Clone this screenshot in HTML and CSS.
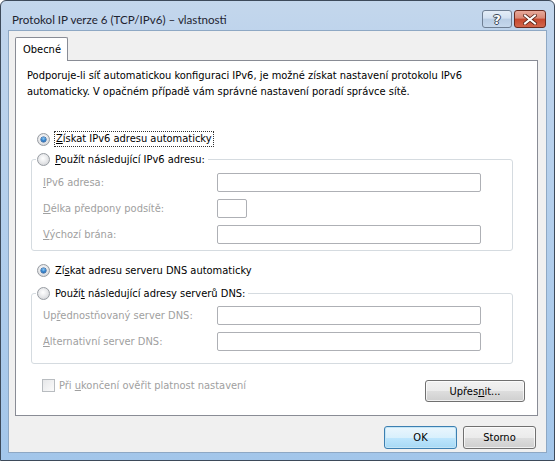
FILE: index.html
```html
<!DOCTYPE html>
<html lang="cs">
<head>
<meta charset="utf-8">
<title>Protokol IP verze 6 (TCP/IPv6) – vlastnosti</title>
<link rel="stylesheet" href="styles.css">
</head>
<body>
<div class="window">
  <div class="titlebar">
    <span class="title">Protokol IP verze 6 (TCP/IPv6) – vlastnosti</span>
    <div class="caption-btns">
      <span class="cap help">?</span>
      <span class="cap close">
        <svg width="14" height="11" viewBox="0 0 14 11"><path d="M2 1.5 L12 9.5 M12 1.5 L2 9.5" stroke="#5a2418" stroke-width="3.6" stroke-linecap="square" fill="none"/><path d="M2 1.5 L12 9.5 M12 1.5 L2 9.5" stroke="#fff" stroke-width="2" stroke-linecap="square" fill="none"/></svg>
      </span>
    </div>
  </div>
  <div class="client">
    <div class="tabs"><div class="tab">Obecné</div></div>
    <div class="panel">
      <p class="intro">Podporuje-li síť automatickou konfiguraci IPv6, je možné získat nastavení protokolu IPv6<br>automaticky. V opačném případě vám správné nastavení poradí správce sítě.</p>

      <div class="radio-row r-ip"><span class="radio checked"></span><span class="focus"><u>Z</u>ískat IPv6 adresu automaticky</span></div>
      <fieldset class="group g1">
        <legend><span class="radio"></span><span class="legend-text"><u>P</u>oužít následující IPv6 adresu:</span></legend>
        <div class="rows">
          <div class="field"><span class="lbl"><u>I</u>Pv6 adresa:</span><span class="input wide"></span></div>
          <div class="field"><span class="lbl"><u>D</u>élka předpony podsítě:</span><span class="input small"></span></div>
          <div class="field"><span class="lbl"><u>V</u>ýchozí brána:</span><span class="input wide"></span></div>
        </div>
      </fieldset>

      <div class="radio-row r-dns"><span class="radio checked"></span><span class="plain">Zí<u>s</u>kat adresu serveru DNS automaticky</span></div>
      <fieldset class="group g2">
        <legend><span class="radio"></span><span class="legend-text">Použí<u>t</u> následující adresy serverů DNS:</span></legend>
        <div class="rows">
          <div class="field"><span class="lbl">Up<u>ř</u>ednostňovaný server DNS:</span><span class="input wide"></span></div>
          <div class="field"><span class="lbl"><u>A</u>lternativní server DNS:</span><span class="input wide"></span></div>
        </div>
      </fieldset>

      <div class="bottom-row">
        <div class="check"><span class="checkbox"></span><span class="lbl">Při <u>u</u>končení ověřit platnost nastavení</span></div>
        <span class="btn adv">Upřes<u>n</u>it...</span>
      </div>
    </div>
    <div class="dialog-btns">
      <span class="btn default">OK</span>
      <span class="btn">Storno</span>
    </div>
  </div>
</div>
</body>
</html>
```

FILE: styles.css
```css
* { box-sizing: border-box; }
html, body { margin: 0; padding: 0; background: #fff; }
body { width: 555px; height: 461px; overflow: hidden; }

.window {
  width: 555px;
  height: 461px;
  border: 1px solid #3d4a5a;
  border-radius: 6px 6px 0 0;
  background: linear-gradient(#c4d7ec 0, #bfd4ec 30px, #b4cfec 200px, #a3c6ea 461px);
  display: flex;
  flex-direction: column;
  padding: 0 7px 7px 7px;
  font-family: "DejaVu Sans Condensed", "DejaVu Sans", sans-serif;
  font-size: 11px;
  color: #000;
}

.titlebar {
  height: 29px;
  display: flex;
  align-items: flex-start;
  justify-content: space-between;
  flex: none;
}
.title {
  font-family: "Lato", "Liberation Sans", sans-serif;
  font-size: 11.6px;
  line-height: 16px;
  margin: 11px 0 0 4px;
  color: #1e2430;
}
.caption-btns {
  display: flex;
  gap: 2px;
  margin-top: 9px;
  margin-right: 1px;
}
.cap {
  height: 18px;
  border-radius: 3px;
  display: flex;
  align-items: center;
  justify-content: center;
}
.help {
  width: 30px;
  border: 1px solid #6f7f93;
  background: linear-gradient(#e4edf7 0, #d3e1f1 45%, #b9cde4 50%, #c6d8ec 100%);
  color: #fff;
  font-family: "DejaVu Sans", sans-serif;
  font-weight: bold;
  font-size: 13px;
  text-shadow: 0 0 1px #2f3c4c, 1px 0 0 #3f4c5c, -1px 0 0 #3f4c5c, 0 1px 0 #3f4c5c, 0 -1px 0 #3f4c5c;
}
.close {
  width: 32px;
  border: 1px solid #6a2a1e;
  background: linear-gradient(#e9a99a 0, #d88875 45%, #c6472d 50%, #d2664c 100%);
}

.client {
  flex: 1;
  background: #f0f0f0;
  padding: 6px 8px 0 6px;
  display: flex;
  flex-direction: column;
  border: 1px solid #8ea8c4;
}

.tabs { display: flex; height: 23px; position: relative; z-index: 1; }
.tab {
  width: 53px;
  height: 24px;
  background: #fff;
  border: 1px solid #898c95;
  border-bottom: none;
  border-radius: 2px 2px 0 0;
  padding: 5px 0 0 7px;
  line-height: 13px;
}

.panel {
  background: #fff;
  border: 1px solid #898c95;
  height: 356px;
  padding: 0 12px 0 15px;
  display: flex;
  flex-direction: column;
}
.panel > * { flex-shrink: 0; }

.intro {
  margin: 7px 0 0 -4px;
  line-height: 16px;
}

.radio-row {
  display: flex;
  align-items: center;
  height: 16px;
  margin-left: 6px;
}
.r-ip { margin-top: 31px; }
.r-dns { margin-top: 11px; }

.radio {
  width: 13px;
  height: 13px;
  border-radius: 50%;
  border: 1px solid #979ca2;
  background: radial-gradient(circle at 45% 40%, #ffffff 0, #e9eaec 45%, #c9cbce 100%);
  position: relative;
  flex: none;
  margin-right: 5px;
}
.radio.checked::after {
  content: "";
  position: absolute;
  left: 3px;
  top: 3px;
  width: 5px;
  height: 5px;
  border-radius: 50%;
  background: radial-gradient(circle at 50% 35%, #8ecbf5 0, #2a7ac6 55%, #12458a 100%);
  box-shadow: 0 0 0 0.5px #1b4f8f;
}
.focus {
  outline: 1px dotted #333;
  outline-offset: 0;
  line-height: 14px;
  padding: 0 1px;
}

.group {
  margin: 4px 12px 0 0;
  padding: 0 0 6px 0;
  border: 1px solid #d5dbe0;
  border-radius: 3px;
  min-width: 0;
}
.g1 { margin-top: 4px; }
.g2 { margin-top: 7px; padding-bottom: 12px; }
.group legend {
  display: flex;
  align-items: center;
  height: 16px;
  padding: 0 3px 0 1px;
  margin-left: 4px;
}
.rows {
  display: flex;
  flex-direction: column;
  gap: 7px;
  padding: 6px 0 0 11px;
}
.g2 .rows { padding-top: 5px; }
.field {
  display: flex;
  align-items: center;
  height: 19px;
}
.lbl { color: #a0a0a0; }
.field .lbl { width: 174px; flex: none; }
.input {
  height: 19px;
  border: 1px solid #aeb0b5;
  border-radius: 2px;
  background: #fff;
}
.input.wide { width: 264px; }
.input.small { width: 30px; }

.bottom-row {
  display: flex;
  align-items: flex-start;
  justify-content: space-between;
  margin: 13px 0 0 11px;
}
.check { display: flex; align-items: center; height: 16px; }
.checkbox {
  width: 13px;
  height: 13px;
  border: 1px solid #b8bcc0;
  background: linear-gradient(135deg, #e6e7e9, #fbfbfb);
  margin-right: 4px;
}

.btn {
  display: flex;
  align-items: center;
  justify-content: center;
  height: 22px;
  border: 1px solid #707070;
  border-radius: 3px;
  background: linear-gradient(#f2f2f2 0, #ebebeb 50%, #dddddd 51%, #cfcfcf 100%);
  box-shadow: inset 0 0 0 1px rgba(255,255,255,0.7);
}
.adv { width: 100px; margin-top: 3px; }

.dialog-btns {
  display: flex;
  justify-content: flex-end;
  gap: 6px;
  margin-top: 10px;
  padding-right: 2px;
}
.dialog-btns .btn { width: 73px; height: 23px; }
.btn.default {
  border-color: #3c7fb1;
  background: linear-gradient(#eaf6fd 0, #d9f0fc 50%, #bee6fd 51%, #a7d9f5 100%);
  box-shadow: inset 0 0 0 1px #c4e5f6;
}
```
